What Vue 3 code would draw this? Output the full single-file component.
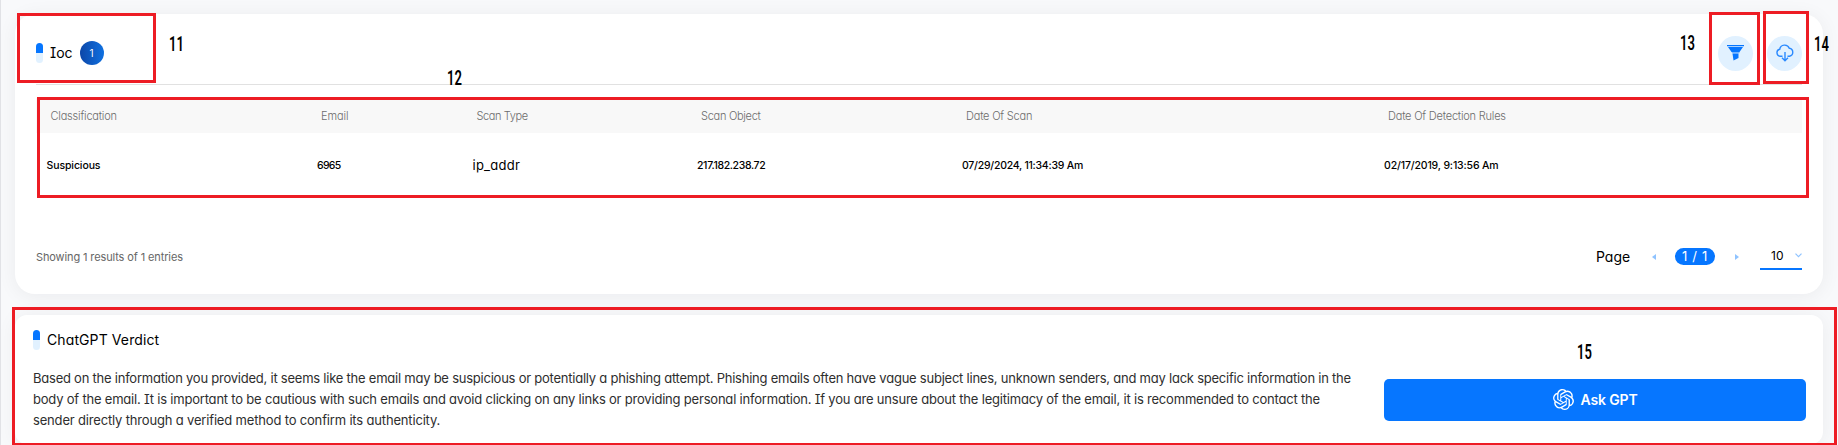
<script setup>
const columns = ['Classification', 'Email', 'Scan Type', 'Scan Object', 'Date Of Scan', 'Date Of Detection Rules']
const row = ['Suspicious', '6965', 'ip_addr', '217.182.238.72', '07/29/2024, 11:34:39 Am', '02/17/2019, 9:13:56 Am']
const verdict = [
  'Based on the information you provided, it seems like the email may be suspicious or potentially a phishing attempt. Phishing emails often have vague subject lines, unknown senders, and may lack specific information in the',
  'body of the email. It is important to be cautious with such emails and avoid clicking on any links or providing personal information. If you are unsure about the legitimacy of the email, it is recommended to contact the',
  'sender directly through a verified method to confirm its authenticity.',
]
</script>

<template>
  <div class="page">
    <section class="card ioc">
      <header class="head">
        <i class="pill"></i>
        <h2 class="title">Ioc</h2>
        <span class="count">1</span>
        <div class="actions">
          <button class="round">
            <svg width="17" height="16" viewBox="0 0 17 16" fill="#0676ff"><path d="M0 0h17v1.200H0zM1 2h15l-3.500 5h-8z" /><path d="M4.500 7h8v1.200h-7z" opacity=".5" /><path d="M5.500 8.500h6V13L6.500 15.500z" /></svg>
          </button>
          <button class="round">
            <svg width="18" height="18" viewBox="0 0 18 18" fill="none" stroke="#2b8aff" stroke-width="1.4"><path d="M6.500 12.200H4.200A3.500 3.500 0 0 1 3.700 5.300A5 5 0 0 1 13.300 4.300A4 4 0 0 1 13.500 12.200H11.500M9 8v8.500M6 13.800l3 3 3-3" /></svg>
          </button>
        </div>
      </header>
      <div class="table">
        <div class="tr th"><span v-for="(c, i) in columns" :key="c" :class="'h' + i">{{ c }}</span></div>
        <div class="tr td"><span v-for="(c, i) in row" :key="c" :class="'c' + i">{{ c }}</span></div>
      </div>
      <footer class="foot">
        <span class="entries">Showing 1 results of 1 entries</span>
        <div class="pager">
          <span class="label">Page</span>
          <svg width="4" height="6" viewBox="0 0 4 6"><path d="M4 0v6L0 3z" fill="#8fc3ff" /></svg>
          <span class="current">1 / 1</span>
          <svg width="4" height="6" viewBox="0 0 4 6"><path d="M0 0v6l4-3z" fill="#8fc3ff" /></svg>
          <div class="size"><span>10</span><svg width="7" height="5" viewBox="0 0 7 5" fill="none" stroke="#8fc3ff" stroke-width="1.2"><path d="M.5.7l3 3 3-3" /></svg></div>
        </div>
      </footer>
    </section>
    <section class="card verdict">
      <header class="vhead"><i class="pill"></i><h2 class="title vtitle">ChatGPT Verdict</h2></header>
      <div class="body">
        <p><span v-for="(l, i) in verdict" :key="i" class="line" :class="'l' + i">{{ l }}</span></p>
        <button class="ask">
          <svg width="21" height="21" viewBox="0 0 24 24" fill="#fff"><path d="M22.2819 9.8211a5.9847 5.9847 0 0 0-.5157-4.9108 6.0462 6.0462 0 0 0-6.5098-2.9A6.0651 6.0651 0 0 0 4.9807 4.1818a5.9847 5.9847 0 0 0-3.9977 2.9 6.0462 6.0462 0 0 0 .7427 7.0966 5.98 5.98 0 0 0 .511 4.9107 6.051 6.051 0 0 0 6.5146 2.9001A5.9847 5.9847 0 0 0 13.2599 24a6.0557 6.0557 0 0 0 5.7718-4.2058 5.9894 5.9894 0 0 0 3.9977-2.9001 6.0557 6.0557 0 0 0-.7475-7.0729zm-9.022 12.6081a4.4755 4.4755 0 0 1-2.8764-1.0408l.1419-.0804 4.7783-2.7582a.7948.7948 0 0 0 .3927-.6813v-6.7369l2.02 1.1686a.071.071 0 0 1 .038.052v5.5826a4.504 4.504 0 0 1-4.4945 4.4944zm-9.6607-4.1254a4.4708 4.4708 0 0 1-.5346-3.0137l.142.0852 4.783 2.7582a.7712.7712 0 0 0 .7806 0l5.8428-3.3685v2.3324a.0804.0804 0 0 1-.0332.0615L9.74 19.9502a4.4992 4.4992 0 0 1-6.1408-1.6464zM2.3408 7.8956a4.485 4.485 0 0 1 2.3655-1.9728V11.6a.7664.7664 0 0 0 .3879.6765l5.8144 3.3543-2.0201 1.1685a.0757.0757 0 0 1-.071 0l-4.8303-2.7865A4.504 4.504 0 0 1 2.3408 7.872zm16.5963 3.8558L13.1038 8.364 15.1192 7.2a.0757.0757 0 0 1 .071 0l4.8303 2.7913a4.4944 4.4944 0 0 1-.6765 8.1042v-5.6772a.79.79 0 0 0-.407-.667zm2.0107-3.0231l-.142-.0852-4.7735-2.7818a.7759.7759 0 0 0-.7854 0L9.409 9.2297V6.8974a.0662.0662 0 0 1 .0284-.0615l4.8303-2.7866a4.4992 4.4992 0 0 1 6.6802 4.66zM8.3065 12.863l-2.02-1.1638a.0804.0804 0 0 1-.038-.0567V6.0742a4.4992 4.4992 0 0 1 7.3757-3.4537l-.142.0805L8.704 5.459a.7948.7948 0 0 0-.3927.6813zm1.0976-2.3654l2.602-1.4998 2.6069 1.4998v2.9994l-2.5974 1.4997-2.6067-1.4997Z" /></svg>
          <span>Ask GPT</span>
        </button>
      </div>
    </section>
    <i class="frame f11"></i><i class="frame f12"></i><i class="frame f13"></i><i class="frame f14"></i><i class="frame f15"></i>
    <b class="note n11">11</b><b class="note n12">12</b><b class="note n13">13</b><b class="note n14">14</b><b class="note n15">15</b>
  </div>
</template>

<style scoped>
.page { position: relative; box-sizing: border-box; width: 1838px; height: 445px; overflow: hidden; padding: 14px 15px 0 14px; background: #f8f9fb; border-left: 1px solid #e1e2e6; font-family: Inter, "Open Sans", sans-serif; font-feature-settings: "cv11", "cv08"; color: #000; }
.card { box-sizing: border-box; background: #fff; box-shadow: 0 2px 20px rgba(20, 25, 35, .06); }
.ioc { height: 280px; border-radius: 20px; padding: 0 21px; }
.head { box-sizing: border-box; height: 71px; border-bottom: 1px solid #e1e1e1; display: flex; align-items: center; padding-top: 8px; }
.pill { width: 7px; height: 20px; border-radius: 4px; background: linear-gradient(#0676ff 50%, #e1f1ff 50%); }
.title { margin: 0 0 0 7px; font-size: 14px; font-weight: 400; line-height: 20px; white-space: nowrap; }
.vtitle { letter-spacing: .1px; }
.count { width: 24px; height: 24px; margin-left: 7px; border-radius: 50%; background: linear-gradient(90deg, #0d47a8, #0f70e0); color: #fff; font-size: 10px; line-height: 24px; text-align: center; }
.actions { margin-left: auto; display: flex; gap: 14px; }
.round { width: 35px; height: 35px; padding: 0; border: 0; border-radius: 50%; background: #e1f1ff; display: flex; align-items: center; justify-content: center; }
.table { margin-top: 13px; }
.tr { display: grid; grid-template-columns: 270.5px 155.500px 224.500px 265px 422px 1fr; align-items: center; white-space: nowrap; }
.th { box-sizing: border-box; height: 35px; padding: 1px 0 0 14.500px; background: #f8f8f8; font-size: 11px; color: #6c6c6c; font-weight: 300; letter-spacing: -.2px; }
.th .h1 { letter-spacing: -.1px; }
.th .h2 { letter-spacing: -.4px; }
.th .h3 { letter-spacing: -.28px; }
.td { height: 64px; padding-left: 10.500px; font-size: 10.500px; font-weight: 500; letter-spacing: -.1px; }
.td .c1 { letter-spacing: -.7px; }
.td .c2 { font-size: 13px; font-weight: 400; letter-spacing: .25px; }
.td .c3 { letter-spacing: -.35px; }
.td .c4 { letter-spacing: -.25px; }
.td .c5 { letter-spacing: -.15px; }
.foot { height: 75px; margin-top: 22px; display: flex; align-items: center; justify-content: space-between; }
.entries { font-size: 11px; color: #666; letter-spacing: -.12px; }
.pager { display: flex; align-items: center; }
.label { font-size: 14px; width: 56px; }
.current { width: 40px; height: 17px; margin: 0 20px 0 19px; border-radius: 9px; background: #0676ff; color: #fff; font-size: 13px; line-height: 17px; letter-spacing: .7px; text-align: center; }
.size { width: 42px; height: 26px; box-sizing: border-box; margin-left: 21px; border-bottom: 2px solid #0676ff; display: flex; align-items: center; justify-content: space-between; padding-left: 11px; font-size: 12px; }
.verdict { height: 129px; margin-top: 21px; border-radius: 12px; padding: 15px 17px 0 18px; }
.vhead { display: flex; align-items: center; height: 20px; }
.body { display: flex; justify-content: space-between; align-items: center; margin-top: 18px; height: 63px; }
p { margin: 0; font-size: 13px; line-height: 21px; color: #2e2e2e; }
.line { display: block; white-space: nowrap; }
.l0 { letter-spacing: -.234px; }
.l1 { letter-spacing: -.2px; }
.l2 { letter-spacing: -.17px; }
.ask { flex: none; width: 422px; height: 42px; padding: 0; border: 0; border-radius: 5px; background: #0676ff; color: #fff; display: flex; align-items: center; justify-content: center; gap: 7px; font: 600 14px Inter, sans-serif; letter-spacing: -.15px; }
.frame { position: absolute; box-sizing: border-box; border: 3px solid #ed1c24; }
.f11 { left: 16px; top: 13px; width: 139px; height: 70px; }
.f12 { left: 36px; top: 97px; width: 1772px; height: 101px; }
.f13 { left: 1708px; top: 12px; width: 51px; height: 73px; }
.f14 { left: 1762px; top: 11px; width: 46px; height: 73px; }
.f15 { left: 11px; top: 307px; width: 1825px; height: 139px; }
.note { position: absolute; font: 600 21px/21px Roboto, sans-serif; transform: scaleX(.62); transform-origin: 0 0; }
.n11 { left: 168px; top: 34px; }
.n12 { left: 446px; top: 68px; }
.n13 { left: 1679px; top: 33px; }
.n14 { left: 1813px; top: 34px; }
.n15 { left: 1576px; top: 342px; }
</style>

<style>
body { margin: 0; }
</style>
